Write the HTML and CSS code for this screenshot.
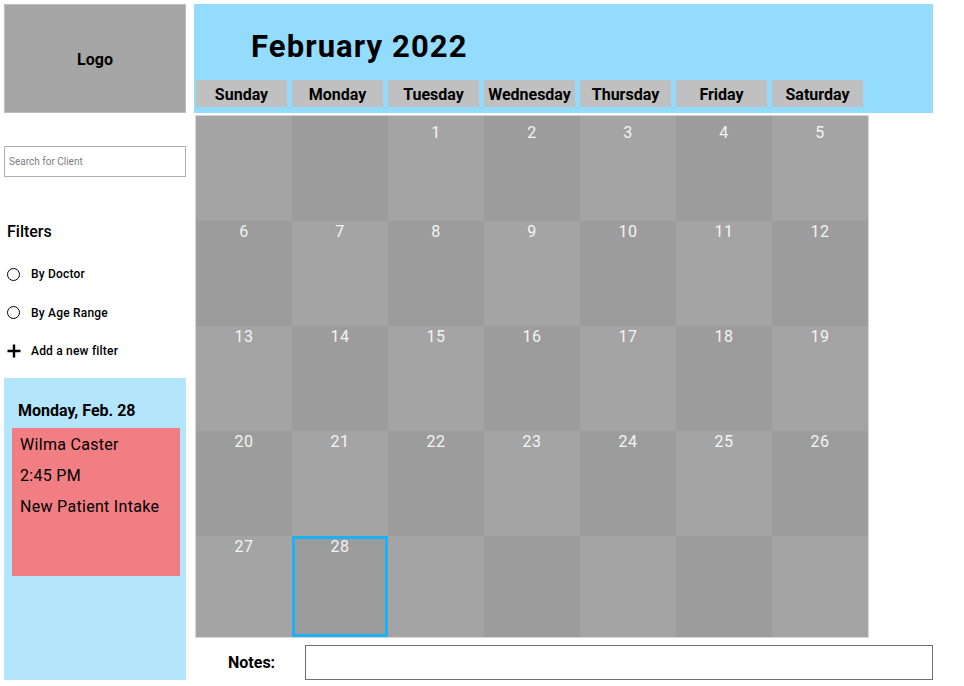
FILE: index.html
```html
<!DOCTYPE html>
<html>
<head>
<meta charset="utf-8">
<link rel="stylesheet" href="styles.css">
</head>
<body>
<div class="page">
  <aside class="sidebar">
    <div class="logo">Logo</div>
    <div class="search">Search for Client</div>
    <div class="filters-title">Filters</div>
    <ul class="filters">
      <li class="filter"><span class="radio"></span>By Doctor</li>
      <li class="filter"><span class="radio"></span>By Age Range</li>
      <li class="filter"><svg class="plus" width="14" height="14" viewBox="0 0 14 14"><path d="M7 0.5V13.5M0.5 7H13.5" stroke="#000" stroke-width="2.4" fill="none"/></svg>Add a new filter</li>
    </ul>
    <div class="day-panel">
      <div class="day-title">Monday, Feb. 28</div>
      <div class="appt">
        <div>Wilma Caster</div>
        <div>2:45 PM</div>
        <div>New Patient Intake</div>
      </div>
    </div>
  </aside>
  <main class="main">
    <header class="header">
      <h1 class="month">February 2022</h1>
      <div class="weekdays">
        <div class="wd">Sunday</div>
        <div class="wd">Monday</div>
        <div class="wd">Tuesday</div>
        <div class="wd">Wednesday</div>
        <div class="wd">Thursday</div>
        <div class="wd">Friday</div>
        <div class="wd">Saturday</div>
      </div>
    </header>
    <div class="grid">
      <div class="cell first l"></div><div class="cell first d"></div><div class="cell first l">1</div><div class="cell first d">2</div><div class="cell first l">3</div><div class="cell first d">4</div><div class="cell first l">5</div>
      <div class="cell d">6</div><div class="cell l">7</div><div class="cell d">8</div><div class="cell l">9</div><div class="cell d">10</div><div class="cell l">11</div><div class="cell d">12</div>
      <div class="cell l">13</div><div class="cell d">14</div><div class="cell l">15</div><div class="cell d">16</div><div class="cell l">17</div><div class="cell d">18</div><div class="cell l">19</div>
      <div class="cell d">20</div><div class="cell l">21</div><div class="cell d">22</div><div class="cell l">23</div><div class="cell d">24</div><div class="cell l">25</div><div class="cell d">26</div>
      <div class="cell l">27</div><div class="cell d selected">28</div><div class="cell l"></div><div class="cell d"></div><div class="cell l"></div><div class="cell d"></div><div class="cell l"></div>
    </div>
    <div class="notes-row">
      <span class="notes-label">Notes:</span>
      <div class="notes-box"></div>
    </div>
  </main>
</div>
</body>
</html>
```
FILE: styles.css
```css
* { box-sizing: border-box; }
html, body { margin: 0; padding: 0; background: #fff; }
body { font-family: Roboto, "Liberation Sans", sans-serif; color: #000; }
.page {
  display: flex;
  gap: 8px;
  padding: 4px 0 0 4px;
  width: 964px;
  height: 686px;
  overflow: hidden;
}
.sidebar { width: 182px; flex: none; display: flex; flex-direction: column; }
.logo {
  height: 109px;
  background: #a6a6a6;
  border: 1px solid #bdbdbd;
  display: flex; align-items: center; justify-content: center;
  padding-top: 2px;
  font-weight: 700; font-size: 16px;
}
.search {
  margin-top: 33px;
  height: 31px;
  border: 1px solid #b0b0b0;
  font-size: 10px;
  color: #7d7d7d;
  display: flex; align-items: center;
  padding-left: 4px;
}
.filters-title {
  margin-top: 45px;
  font-size: 16px;
  line-height: 20px;
  font-weight: 500;
  padding-left: 3px;
}
.filters { list-style: none; margin: 13px 0 0; padding: 0; }
.filter {
  height: 38.4px;
  display: flex; align-items: center;
  font-size: 12px;
  font-weight: 500;
  letter-spacing: 0.2px;
  padding-left: 3px;
}
.radio {
  width: 13px; height: 13px;
  border: 1.5px solid #000;
  border-radius: 50%;
  margin-right: 11px;
  flex: none;
}
.plus { margin-right: 10px; flex: none; }
.day-panel {
  margin-top: 8px;
  height: 302px;
  background: #b3e5fc;
  padding: 23px 6px 0 8px;
}
.day-title {
  font-size: 16px; font-weight: 700; line-height: 20px;
  padding-left: 6px;
}
.appt {
  margin-top: 7px;
  height: 148px;
  background: #f07e83;
  padding: 1px 0 0 8px;
  font-size: 16px;
  letter-spacing: 0.3px;
  line-height: 31px;
}
.main { width: 739px; flex: none; display: flex; flex-direction: column; }
.header {
  height: 109px;
  background: #94dcfd;
  padding: 23px 0 0 2px;
}
.month {
  margin: 0 0 0 55px;
  font-size: 31px;
  letter-spacing: 1.1px;
  line-height: 40px;
  font-weight: 700;
}
.weekdays { display: flex; gap: 5px; margin-top: 13px; }
.wd {
  width: 91px; height: 27px;
  background: #c0c0c0;
  font-size: 16px; font-weight: 700; line-height: 29px;
  text-align: center;
  overflow: hidden;
}
.grid {
  margin: 3px 0 0 2px;
  width: 672px;
  display: grid;
  grid-template-columns: repeat(7, 96px);
  grid-template-rows: 105px 105px 105px 105px 101px;
  box-shadow: 0 0 0 1px #d6d6d6;
}
.cell {
  color: #f4f4f4;
  font-size: 16px;
  letter-spacing: 0.4px;
  line-height: 19px;
  padding-top: 1px;
  text-align: center;
}
.cell.first { padding-top: 7px; }
.cell.l { background: #a4a4a4; }
.cell.d { background: #9c9c9c; }
.cell.selected { box-shadow: inset 0 0 0 3px #1ab2f5; }
.notes-row {
  margin-top: 8px;
  display: flex; align-items: center;
  height: 35px;
}
.notes-label {
  margin-left: 34px;
  width: 77px;
  font-size: 16px; font-weight: 700;
}
.notes-box {
  width: 628px; height: 35px;
  border: 1px solid #6f6f6f;
}
```
